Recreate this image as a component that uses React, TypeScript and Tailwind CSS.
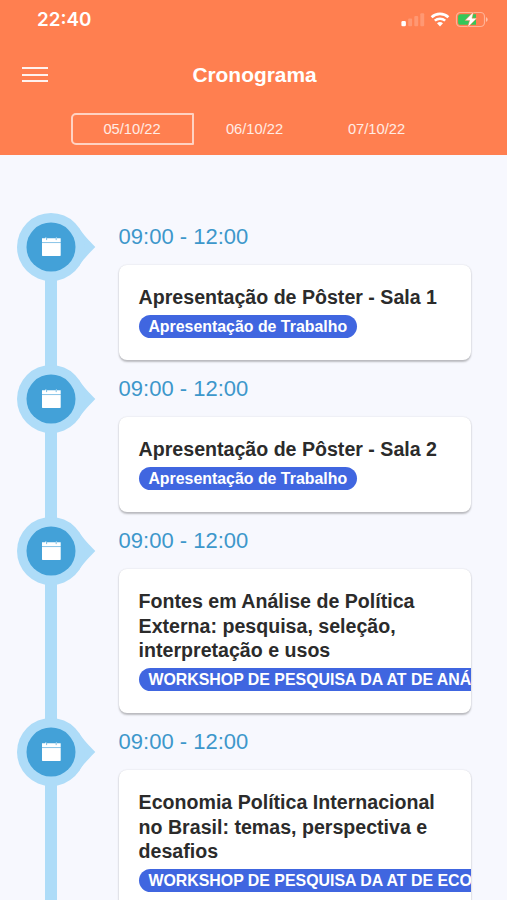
import React from 'react';

interface ScheduleItem {
  id: number;
  time: string;
  lines: string[];
  tag: string;
}

const days = ['05/10/22', '06/10/22', '07/10/22'];

const items: ScheduleItem[] = [
  { id: 1, time: '09:00 - 12:00', lines: ['Apresentação de Pôster - Sala 1'], tag: 'Apresentação de Trabalho' },
  { id: 2, time: '09:00 - 12:00', lines: ['Apresentação de Pôster - Sala 2'], tag: 'Apresentação de Trabalho' },
  {
    id: 3,
    time: '09:00 - 12:00',
    lines: ['Fontes em Análise de Política', 'Externa: pesquisa, seleção,', 'interpretação e usos'],
    tag: 'WORKSHOP DE PESQUISA DA AT DE ANÁLISE DE POLÍTICA EXTERNA',
  },
  {
    id: 4,
    time: '09:00 - 12:00',
    lines: ['Economia Política Internacional', 'no Brasil: temas, perspectiva e', 'desafios'],
    tag: 'WORKSHOP DE PESQUISA DA AT DE ECONOMIA POLÍTICA INTERNACIONAL',
  },
];

function StatusIcons() {
  return (
    <svg width="90" height="20" viewBox="0 0 90 20" fill="none">
      {/* Signal */}
      <rect x="1.4" y="11.1" width="4.5" height="5.2" rx="1.3" fill="#fff" />
      <rect x="8.2" y="8.6" width="3.9" height="7.7" rx="1" fill="#fff" fillOpacity="0.2" />
      <rect x="14.3" y="6" width="3.9" height="10.3" rx="1" fill="#fff" fillOpacity="0.2" />
      <rect x="20.3" y="3.2" width="3.9" height="13.1" rx="1" fill="#fff" fillOpacity="0.2" />
      {/* Wifi */}
      <path d="M31.6 7.2a12.3 12.3 0 0 1 16.8 0" stroke="#fff" strokeWidth="2.7" />
      <path d="M34.8 10.7a7.6 7.6 0 0 1 10.4 0" stroke="#fff" strokeWidth="2.5" />
      <path d="M37 13.3a4.5 4.5 0 0 1 6 0L40 16.4z" fill="#fff" />
      {/* Battery */}
      <rect x="56.5" y="2.5" width="28" height="14" rx="4" stroke="#fff" strokeOpacity="0.4" strokeWidth="1.2" />
      <path d="M86 7.200v4.600c1-.4 1.700-1.200 1.700-2.300S87 7.600 86 7.200z" fill="#fff" fillOpacity="0.5" />
      <path d="M60.700 4.200H76v10.600H60.700a2.600 2.600 0 0 1-2.600-2.600V6.800a2.600 2.600 0 0 1 2.600-2.600z" fill="#34c759" />
      <path d="M73.600 1.700 65 10.400h4.600l-2 7 9.300-9.200h-4.900z" fill="#fff" stroke="#ff7f50" strokeWidth="0.5" />
    </svg>
  );
}

function Marker() {
  return (
    <svg width="80" height="68" viewBox="0 0 80 68" className="relative shrink-0">
      <path d="M62 15C66.500 22 71 26.500 78.300 34C71 41.500 66.500 46 62 53z" fill="#aedcf8" />
      <circle cx="34" cy="34" r="34" fill="#aedcf8" />
      <circle cx="34" cy="34" r="24.5" fill="#43a1d8" />
      <path d="M25 25.200h3.300v-.8h1v.8h9.600v-.8h1v.8h3.800v4H25z" fill="#fff" />
      <path d="M25 30.100h18.700v12.200a.6.6 0 0 1-.6.6H25.600a.6.6 0 0 1-.6-.6z" fill="#fff" />
      <path d="M25 29.600h18.700" stroke="#9bcdea" strokeWidth="0.8" />
      <path d="M29.600 24.500v2.600M39.200 24.500v2.600" stroke="#70b8e2" strokeWidth="0.9" />
    </svg>
  );
}

function ScheduleRow({ item }: { item: ScheduleItem }) {
  return (
    <div className="flex">
      <div className="flex w-[101.6px] shrink-0 flex-col">
        <Marker />
        <div className="-mt-px -mb-px ml-7 w-3 grow bg-[#aedcf8]" />
      </div>
      <div className="w-[352px] pb-[5px]">
        <p className="pt-[10.9px] text-[22px] leading-[25px] text-[#3d97cb]">{item.time}</p>
        <div className="mt-[15.7px] overflow-hidden rounded-[8px] bg-white pt-[20.3px] pb-[22.4px] pl-5 shadow-[0_1.5px_2px_rgba(0,0,0,0.24),0_0_2px_rgba(0,0,0,0.08)]">
          <h2 className="text-[19.6px] leading-[24.5px] font-bold whitespace-nowrap text-[#2b2b2b]">
            {item.lines.map((line) => (
              <span key={line} className="block">
                {line}
              </span>
            ))}
          </h2>
          {/* Long tags run past the card and get clipped */}
          <div className="mt-[5.4px] flex">
            <span className="h-[23px] shrink-0 rounded-full bg-[#4066e0] px-[9.8px] text-[15.9px] leading-[23px] font-bold whitespace-nowrap text-white">
              {item.tag}
            </span>
          </div>
        </div>
      </div>
    </div>
  );
}

export default function App() {
  return (
    <div className="flex h-[900px] w-[507px] flex-col overflow-hidden bg-[#f7f8fe] font-['Liberation_Sans',Arial,sans-serif]">
      <header className="h-[155.4px] shrink-0 bg-[#ff7f50] text-white">
        <div className="flex h-[39px] items-center justify-between pr-[17px] pl-[37px]">
          <span className="font-['Inter',sans-serif] text-[18.8px] leading-[39px] font-semibold">22:40</span>
          <StatusIcons />
        </div>
        <div className="grid h-[74px] grid-cols-[1fr_auto_1fr] items-center pr-[20px] pb-[3px] pl-[22px]">
          <button className="flex w-[26px] flex-col gap-[4.5px]">
            <span className="h-[2px] bg-white/90" />
            <span className="h-[2px] bg-white/90" />
            <span className="h-[2px] bg-white/90" />
          </button>
          <h1 className="pt-px text-[20.9px] leading-6 font-bold">Cronograma</h1>
        </div>
        <div className="ml-[70.5px] flex h-8">
          {days.map((day, i) => (
            <button
              key={day}
              className={
                i === 0
                  ? 'w-[123px] rounded-l-[5px] rounded-r-[1px] border-2 border-white/65 pt-px text-[14.7px] text-white/85'
                  : 'w-[122px] pt-px text-[14.7px] text-white/85'
              }
            >
              {day}
            </button>
          ))}
        </div>
      </header>
      <main className="pt-[57.6px] pl-[17px]">
        {items.map((item) => (
          <ScheduleRow key={item.id} item={item} />
        ))}
      </main>
    </div>
  );
}
